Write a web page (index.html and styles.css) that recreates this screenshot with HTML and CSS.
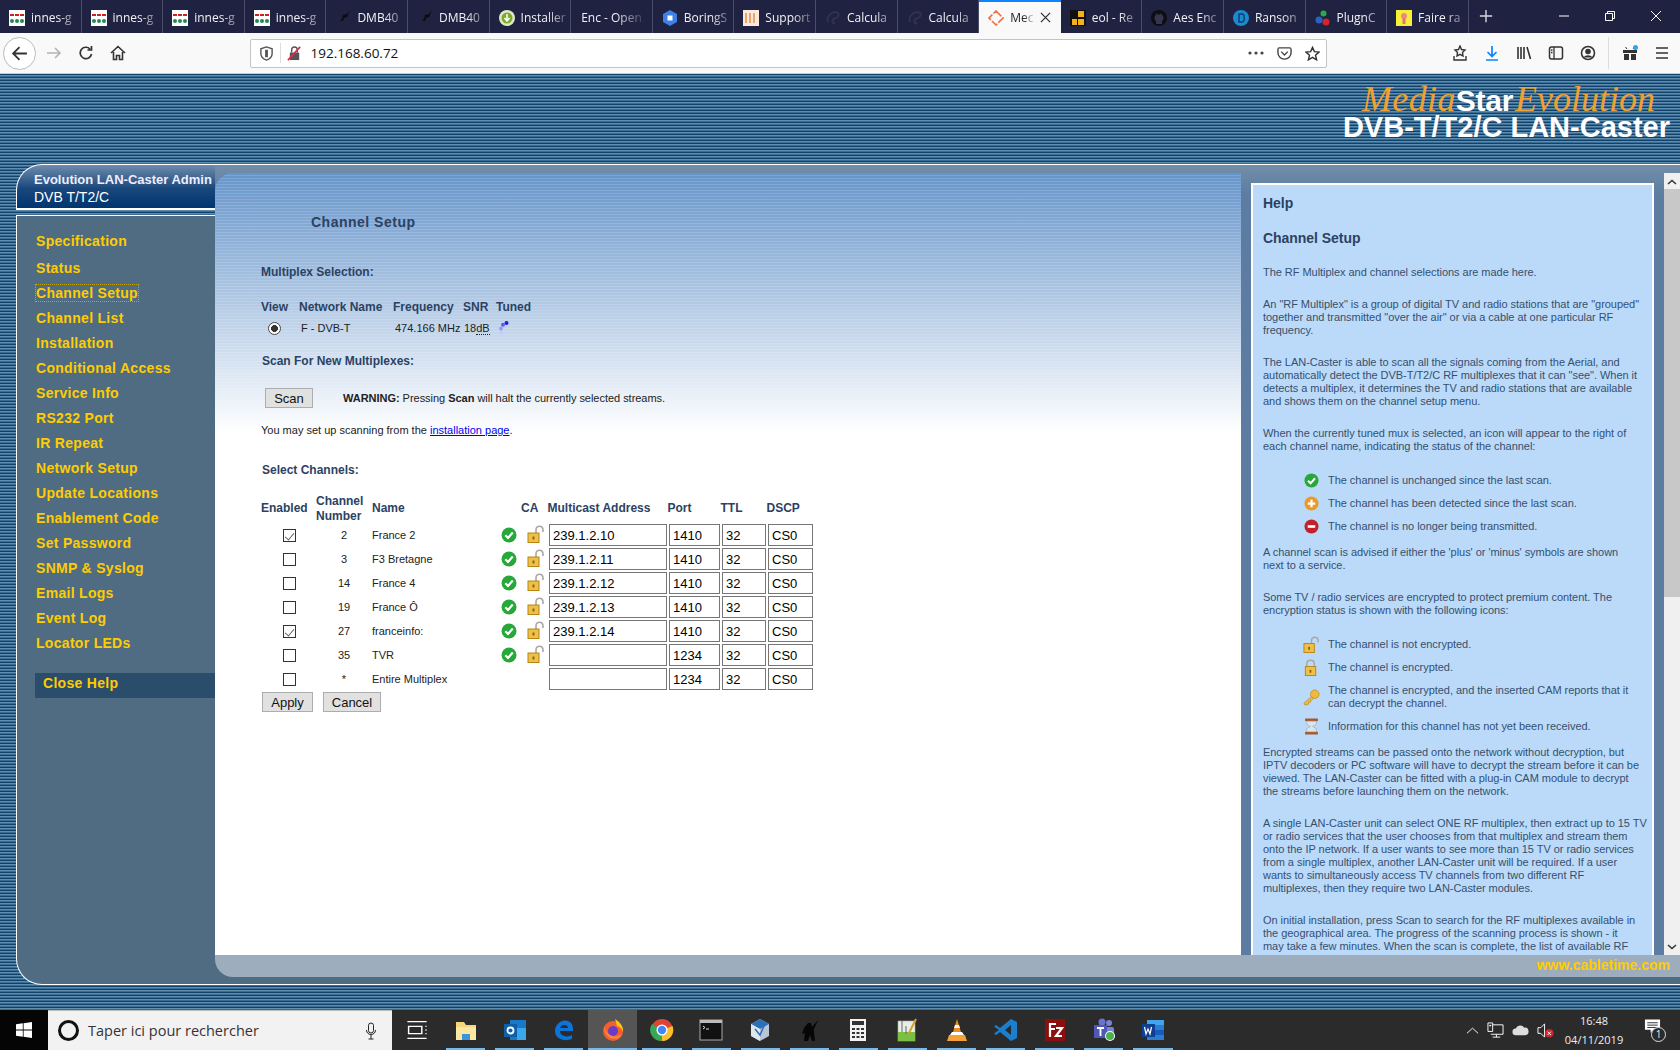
FILE: index.html
```html
<!DOCTYPE html>
<html lang="fr">
<head>
	<meta charset="utf-8">
	<title>MediaStar Evolution</title>
	<link rel="stylesheet" href="styles.css">
</head>
<body>
	<!-- icons used more than once -->
	<svg class="defs" aria-hidden="true">
		<symbol id="i-inn" viewBox="0 0 16 16"><rect width="16" height="16" fill="#fff"/><rect x="1" y="4" width="4" height="2" fill="#c22"/><rect x="6" y="4" width="4" height="2" fill="#c22"/><rect x="11" y="4" width="4" height="2" fill="#c22"/><circle cx="3" cy="11" r="2" fill="#285"/><circle cx="8" cy="11" r="2" fill="#285"/><circle cx="13" cy="11" r="2" fill="#285"/></symbol>
		<symbol id="i-dmb" viewBox="0 0 16 16"><path d="M1 15 7 9 8 5 12 4 15 0 12 7 9 8 8 11 5 11Z" fill="#0b0b10"/></symbol>
		<symbol id="i-calc" viewBox="0 0 16 16"><path d="M3 12C1 7 6 2 11 2 15 3 14 7 11 8 7 9 6 12 10 14" fill="none" stroke="#30334a" stroke-width="2"/></symbol>
		<symbol id="i-ok" viewBox="0 0 16 16"><circle cx="8" cy="8" r="7.5" fill="#27a83a"/><path d="M4.3 8.2 7 11l4.8-5.4" fill="none" stroke="#fff" stroke-width="2.2"/></symbol>
		<symbol id="i-open" viewBox="0 0 18 18"><path d="M9 9V5c0-5 7-5 7 0v2" fill="none" stroke="#a8a8a8" stroke-width="1.6"/><rect x="1" y="8" width="11" height="9.5" fill="#eec04a" stroke="#b98512"/><rect x="5.6" y="11.5" width="1.8" height="3" fill="#8a5d08"/></symbol>
	</svg>

	<div class="tabbar">
		<div class="tab"><svg class="fav"><use href="#i-inn"/></svg><span class="tab-title">innes-g</span></div>
		<div class="tab"><svg class="fav"><use href="#i-inn"/></svg><span class="tab-title">innes-g</span></div>
		<div class="tab"><svg class="fav"><use href="#i-inn"/></svg><span class="tab-title">innes-g</span></div>
		<div class="tab"><svg class="fav"><use href="#i-inn"/></svg><span class="tab-title">innes-g</span></div>
		<div class="tab"><svg class="fav"><use href="#i-dmb"/></svg><span class="tab-title">DMB40</span></div>
		<div class="tab"><svg class="fav"><use href="#i-dmb"/></svg><span class="tab-title">DMB40</span></div>
		<div class="tab"><svg class="fav" viewBox="0 0 16 16"><circle cx="8" cy="8" r="8" fill="#dfe8c8"/><circle cx="8" cy="8" r="5.5" fill="#7cab2c"/><path d="M8 4v6M5.500 8 8 11l2.500-3" fill="none" stroke="#fff" stroke-width="1.500"/></svg><span class="tab-title">Installer</span></div>
		<div class="tab"><span class="tab-title wide">Enc - Open</span></div>
		<div class="tab"><svg class="fav" viewBox="0 0 16 16"><path d="M8 0 15 4V12L8 16 1 12V4Z" fill="#3f7fe8"/><rect x="5.500" y="5.500" width="5" height="5" fill="#fff"/></svg><span class="tab-title">BoringS</span></div>
		<div class="tab"><svg class="fav" viewBox="0 0 16 16"><rect width="16" height="16" fill="#fbeadb"/><path d="M3 3v10M7 3v10M11 3v10" stroke="#eda56d" stroke-width="2"/></svg><span class="tab-title">Support</span></div>
		<div class="tab"><svg class="fav"><use href="#i-calc"/></svg><span class="tab-title">Calcula</span></div>
		<div class="tab"><svg class="fav"><use href="#i-calc"/></svg><span class="tab-title">Calcula</span></div>
		<div class="tab tab-active"><svg class="fav" viewBox="0 0 16 16"><path d="M8 1 15 8 8 15 1 8Z" fill="none" stroke="#f0703a" stroke-width="1.600" stroke-dasharray="7.500 1.500"/></svg><span class="tab-title short">Mec</span><svg class="tab-close" viewBox="0 0 12 12"><path d="M1 1l10 10M11 1 1 11" stroke="#333" stroke-width="1.400"/></svg></div>
		<div class="tab"><svg class="fav" viewBox="0 0 16 16"><rect width="16" height="16" fill="#111"/><rect x="8" y="1" width="6" height="6" fill="#f5b11d"/><rect x="2" y="9" width="5" height="6" fill="#f5b11d"/><rect x="8" y="9" width="6" height="6" fill="#f5b11d"/></svg><span class="tab-title">eol - Re</span></div>
		<div class="tab"><svg class="fav" viewBox="0 0 16 16"><circle cx="8" cy="8" r="8" fill="#0d0d12"/><path d="M5 14V11C3 10 3 6 5 5L5.500 3 7 4.500H9L10.500 3 11 5C13 6 13 10 11 11V14Z" fill="#34364e"/></svg><span class="tab-title">Aes Enc</span></div>
		<div class="tab"><svg class="fav" viewBox="0 0 16 16"><circle cx="8" cy="8" r="8" fill="#1b8bd0"/><path d="M6 4h3c3 0 3 8 0 8H6Z" fill="none" stroke="#0c3f6a" stroke-width="1.500"/></svg><span class="tab-title">Ranson</span></div>
		<div class="tab"><svg class="fav" viewBox="0 0 16 16"><circle cx="8.500" cy="3.500" r="3" fill="#2aa84a"/><circle cx="4" cy="10" r="3.500" fill="#2b5fc8"/><circle cx="11" cy="12" r="3.500" fill="#d6222c"/></svg><span class="tab-title">PlugnC</span></div>
		<div class="tab"><svg class="fav" viewBox="0 0 16 16"><rect width="16" height="16" fill="#f7ee3a"/><circle cx="8" cy="6" r="3" fill="#e88"/><rect x="6.500" y="8" width="3" height="6" fill="#d77"/></svg><span class="tab-title">Faire ra</span></div>
		<svg class="new-tab" viewBox="0 0 16 16"><path d="M8 1v14M1 8h14" stroke="#d8d8e0" stroke-width="1.600"/></svg>
		<div class="win-ctrls">
			<svg viewBox="0 0 12 12"><path d="M1 6h10" stroke="#fff"/></svg>
			<svg viewBox="0 0 12 12"><path d="M1.500 3.500h7v7h-7zM3.500 3.500v-2h7v7h-2" fill="none" stroke="#fff"/></svg>
			<svg viewBox="0 0 12 12"><path d="M1 1l10 10M11 1 1 11" stroke="#fff"/></svg>
		</div>
	</div>

	<div class="toolbar">
		<div class="back-btn"><svg viewBox="0 0 16 16"><path d="M15 8H2M8 2 2 8l6 6" fill="none" stroke="#333" stroke-width="1.700"/></svg></div>
		<svg class="tool-ic" viewBox="0 0 16 16"><path d="M1 8h13M9 3l5 5-5 5" fill="none" stroke="#b4b4b8" stroke-width="1.600"/></svg>
		<svg class="tool-ic" viewBox="0 0 16 16"><path d="M13.500 9A5.700 5.700 0 1 1 12 4M13.500 1v4h-4" fill="none" stroke="#333" stroke-width="1.700"/></svg>
		<svg class="tool-ic" viewBox="0 0 16 16"><path d="M1 8 8 1.500 15 8M3.500 7v7.500h3v-4h3v4h3V7" fill="none" stroke="#333" stroke-width="1.600"/></svg>
		<div class="urlbar">
			<svg class="url-ic" viewBox="0 0 16 16"><path d="M8 1 2 3v5c0 4 3 6 6 7 3-1 6-3 6-7V3Z" fill="none" stroke="#555" stroke-width="1.500"/><path d="M8 4v8" stroke="#555" stroke-width="3"/></svg>
			<span class="url-sep"></span>
			<svg class="url-ic" viewBox="0 0 16 16"><rect x="3" y="7" width="10" height="8" fill="#555"/><path d="M5 7V4c0-4 6-4 6 0v3" fill="none" stroke="#555" stroke-width="1.500"/><path d="M1 15 14 1" stroke="#e22850" stroke-width="1.800"/></svg>
			<span class="url-text">192.168.60.72</span>
			<svg class="url-dots" viewBox="0 0 16 4"><circle cx="2" cy="2" r="1.600" fill="#444"/><circle cx="8" cy="2" r="1.600" fill="#444"/><circle cx="14" cy="2" r="1.600" fill="#444"/></svg>
			<svg class="url-ic" viewBox="0 0 16 16"><path d="M2 2h12c1 0 1 1 1 2v3c0 4-3 7-7 7S1 11 1 7V4c0-1 0-2 1-2Z" fill="none" stroke="#444" stroke-width="1.500"/><path d="m4.500 6 3.500 3.500L11.500 6" fill="none" stroke="#444" stroke-width="1.500"/></svg>
			<svg class="url-ic" viewBox="0 0 16 16"><path d="M8 1.500 10 6l5 .5-3.800 3.300 1.200 5L8 12.200l-4.400 2.600 1.200-5L1 6.500 6 6Z" fill="none" stroke="#333" stroke-width="1.500"/></svg>
		</div>
		<div class="tool-right">
			<svg class="tool-ic" viewBox="0 0 16 16"><path d="M8 1 9.500 4.500 13 5 10.500 7.500 11 11 8 9.300 5 11 5.500 7.500 3 5 6.500 4.500Z" fill="none" stroke="#333" stroke-width="1.400"/><path d="M2 11v4h12v-4" fill="none" stroke="#333" stroke-width="1.400"/></svg>
			<svg class="tool-ic" viewBox="0 0 16 16"><path d="M8 1v10M3.500 7 8 11.500 12.500 7M2 15h12" fill="none" stroke="#0a84ff" stroke-width="1.700"/></svg>
			<svg class="tool-ic" viewBox="0 0 16 16"><path d="M2 2v12M5 2v12M8 2v12M11 2l3.500 12" fill="none" stroke="#333" stroke-width="1.600"/></svg>
			<svg class="tool-ic" viewBox="0 0 16 16"><rect x="1.500" y="2" width="13" height="12" rx="2" fill="none" stroke="#333" stroke-width="1.500"/><path d="M6 2v12M3 5h1.500M3 7.500h1.500" stroke="#333" stroke-width="1.300"/></svg>
			<svg class="tool-ic" viewBox="0 0 16 16"><circle cx="8" cy="8" r="6.500" fill="none" stroke="#333" stroke-width="1.600"/><circle cx="8" cy="6.500" r="2.800" fill="#333"/><path d="M3.500 12.500c2-3 7-3 9 0" fill="#333"/></svg>
			<span class="tool-sep"></span>
			<svg class="tool-ic" viewBox="0 0 16 16"><path d="M1 5h14v3H1zM2 9h5v6H2zM9 9h5v6H9z" fill="#333"/><path d="M5 4 3.500 2M11 4l1.500-2" stroke="#333"/><circle cx="13.500" cy="2.500" r="2.500" fill="#2aa4f4"/></svg>
			<svg class="tool-ic" viewBox="0 0 16 16"><path d="M2 3h12M2 8h12M2 13h12" stroke="#333" stroke-width="1.700"/></svg>
		</div>
	</div>

	<div class="page">
		<div class="banner">
			<div class="logo-top"><span class="logo-serif media">Media</span><span class="logo-bold">Star</span><span class="logo-serif evo">Evolution</span></div>
			<div class="logo-sub">DVB-T/T2/C LAN-Caster</div>
		</div>

		<div class="frame">
			<div class="side">
				<div class="side-head">
					<div class="side-title">Evolution LAN-Caster Admin</div>
					<div class="side-sub">DVB T/T2/C</div>
				</div>
				<div class="side-nav">
					<a class="nav-item first" href="#">Specification</a>
					<a class="nav-item" href="#">Status</a>
					<a class="nav-item" href="#"><span class="nav-current">Channel Setup</span></a>
					<a class="nav-item" href="#">Channel List</a>
					<a class="nav-item" href="#">Installation</a>
					<a class="nav-item" href="#">Conditional Access</a>
					<a class="nav-item" href="#">Service Info</a>
					<a class="nav-item" href="#">RS232 Port</a>
					<a class="nav-item" href="#">IR Repeat</a>
					<a class="nav-item" href="#">Network Setup</a>
					<a class="nav-item" href="#">Update Locations</a>
					<a class="nav-item" href="#">Enablement Code</a>
					<a class="nav-item" href="#">Set Password</a>
					<a class="nav-item" href="#">SNMP &amp; Syslog</a>
					<a class="nav-item" href="#">Email Logs</a>
					<a class="nav-item" href="#">Event Log</a>
					<a class="nav-item" href="#">Locator LEDs</a>
					<a class="close-help" href="#">Close Help</a>
				</div>
			</div>

			<div class="main">
				<div class="main-row">
					<div class="content">
						<h2 class="content-title">Channel Setup</h2>
						<h3 class="sec-mux">Multiplex Selection:</h3>
						<table class="mux">
							<tr><th class="m1">View</th><th class="m2">Network Name</th><th class="m3">Frequency</th><th class="m4">SNR</th><th>Tuned</th></tr>
							<tr>
								<td><input class="radio" type="radio" checked></td>
								<td class="mux-net">F - DVB-T</td>
								<td class="mux-net">474.166 MHz</td>
								<td>18<span class="abbr">dB</span></td>
								<td>
									<svg class="tuned" viewBox="0 0 12 14"><circle cx="9.500" cy="2" r="2" fill="#1c1ce0"/><circle cx="6" cy="3.800" r="2" fill="#5a5aec"/><circle cx="4" cy="7.500" r="2" fill="#9a9af4"/><circle cx="4.500" cy="11.800" r="2" fill="#c8c8fa"/></svg>
								</td>
							</tr>
						</table>
						<h3 class="sec-scan">Scan For New Multiplexes:</h3>
						<div class="scan-row">
							<button class="btn btn-scan" type="button">Scan</button>
							<span class="warn"><b>WARNING:</b> Pressing <b>Scan</b> will halt the currently selected streams.</span>
						</div>
						<p class="note">You may set up scanning from the <a href="#">installation page</a>.</p>
						<h3 class="sec-chan">Select Channels:</h3>

						<table class="chan">
							<colgroup>
								<col class="c-en"><col class="c-num"><col class="c-name"><col class="c-st"><col class="c-ca"><col class="c-addr"><col class="c-port"><col class="c-ttl"><col class="c-dscp">
							</colgroup>
							<thead>
								<tr><th>Enabled</th><th>Channel<br>Number</th><th>Name</th><th></th><th class="th-ca">CA</th><th>Multicast Address</th><th>Port</th><th>TTL</th><th>DSCP</th></tr>
							</thead>
							<tbody>
								<tr>
									<td class="center"><input class="check" type="checkbox" checked></td><td class="center">2</td><td>France 2</td>
									<td><svg class="ic-st"><use href="#i-ok"/></svg></td><td><svg class="ic-lock"><use href="#i-open"/></svg></td>
									<td><input class="field" value="239.1.2.10"></td><td><input class="field" value="1410"></td><td><input class="field" value="32"></td><td><input class="field" value="CS0"></td>
								</tr>
								<tr>
									<td class="center"><input class="check" type="checkbox"></td><td class="center">3</td><td>F3 Bretagne</td>
									<td><svg class="ic-st"><use href="#i-ok"/></svg></td><td><svg class="ic-lock"><use href="#i-open"/></svg></td>
									<td><input class="field" value="239.1.2.11"></td><td><input class="field" value="1410"></td><td><input class="field" value="32"></td><td><input class="field" value="CS0"></td>
								</tr>
								<tr>
									<td class="center"><input class="check" type="checkbox"></td><td class="center">14</td><td>France 4</td>
									<td><svg class="ic-st"><use href="#i-ok"/></svg></td><td><svg class="ic-lock"><use href="#i-open"/></svg></td>
									<td><input class="field" value="239.1.2.12"></td><td><input class="field" value="1410"></td><td><input class="field" value="32"></td><td><input class="field" value="CS0"></td>
								</tr>
								<tr>
									<td class="center"><input class="check" type="checkbox"></td><td class="center">19</td><td>France Ô</td>
									<td><svg class="ic-st"><use href="#i-ok"/></svg></td><td><svg class="ic-lock"><use href="#i-open"/></svg></td>
									<td><input class="field" value="239.1.2.13"></td><td><input class="field" value="1410"></td><td><input class="field" value="32"></td><td><input class="field" value="CS0"></td>
								</tr>
								<tr>
									<td class="center"><input class="check" type="checkbox" checked></td><td class="center">27</td><td>franceinfo:</td>
									<td><svg class="ic-st"><use href="#i-ok"/></svg></td><td><svg class="ic-lock"><use href="#i-open"/></svg></td>
									<td><input class="field" value="239.1.2.14"></td><td><input class="field" value="1410"></td><td><input class="field" value="32"></td><td><input class="field" value="CS0"></td>
								</tr>
								<tr>
									<td class="center"><input class="check" type="checkbox"></td><td class="center">35</td><td>TVR</td>
									<td><svg class="ic-st"><use href="#i-ok"/></svg></td><td><svg class="ic-lock"><use href="#i-open"/></svg></td>
									<td><input class="field" value=""></td><td><input class="field" value="1234"></td><td><input class="field" value="32"></td><td><input class="field" value="CS0"></td>
								</tr>
								<tr>
									<td class="center"><input class="check" type="checkbox"></td><td class="center">*</td><td colspan="3">Entire Multiplex</td>
									<td><input class="field" value=""></td><td><input class="field" value="1234"></td><td><input class="field" value="32"></td><td><input class="field" value="CS0"></td>
								</tr>
							</tbody>
						</table>
						<div class="form-btns">
							<button class="btn btn-apply" type="button">Apply</button>
							<button class="btn btn-cancel" type="button">Cancel</button>
						</div>
					</div>

					<div class="help-col">
						<div class="help">
							<h3 class="help-h">Help</h3>
							<h3 class="help-h help-h2">Channel Setup</h3>
							<p>The RF Multiplex and channel selections are made here.</p>
							<p>An "RF Multiplex" is a group of digital TV and radio stations that are "grouped"<br>together and transmitted "over the air" or via a cable at one particular RF<br>frequency.</p>
							<p>The LAN-Caster is able to scan all the signals coming from the Aerial, and<br>automatically detect the DVB-T/T2/C RF multiplexes that it can "see". When it<br>detects a multiplex, it determines the TV and radio stations that are available<br>and shows them on the channel setup menu.</p>
							<p>When the currently tuned mux is selected, an icon will appear to the right of<br>each channel name, indicating the status of the channel:</p>
							<div class="legend">
								<svg class="leg-ic"><use href="#i-ok"/></svg><span>The channel is unchanged since the last scan.</span>
								<svg class="leg-ic" viewBox="0 0 16 16"><circle cx="8" cy="8" r="7.500" fill="#ee9a22"/><path d="M8 4v8M4 8h8" stroke="#fff" stroke-width="2.400"/></svg><span>The channel has been detected since the last scan.</span>
								<svg class="leg-ic" viewBox="0 0 16 16"><circle cx="8" cy="8" r="7.500" fill="#c4202a"/><path d="M4 8h8" stroke="#fff" stroke-width="2.800"/></svg><span>The channel is no longer being transmitted.</span>
							</div>
							<p>A channel scan is advised if either the 'plus' or 'minus' symbols are shown<br>next to a service.</p>
							<p>Some TV / radio services are encrypted to protect premium content. The<br>encryption status is shown with the following icons:</p>
							<div class="legend">
								<svg class="leg-ic leg-big"><use href="#i-open"/></svg><span>The channel is not encrypted.</span>
								<svg class="leg-ic leg-big" viewBox="0 0 18 18"><path d="M4 8V5c0-5 8-5 8 0v3" fill="none" stroke="#a8a8a8" stroke-width="1.600"/><rect x="2.500" y="8" width="11" height="9.500" fill="#eec04a" stroke="#b98512"/><rect x="7" y="11.500" width="1.800" height="3" fill="#8a5d08"/></svg><span>The channel is encrypted.</span>
								<svg class="leg-ic leg-big" viewBox="0 0 18 18"><path d="M1 15 9 8l2 2-2 2-1 0 0 2-2 0 0 2-4 1Z" fill="#eeb93c" stroke="#b98512" stroke-width=".7"/><circle cx="12.500" cy="5.500" r="4.500" fill="#eeb93c" stroke="#b98512" stroke-width=".7"/></svg><span>The channel is encrypted, and the inserted CAM reports that it<br>can decrypt the channel.</span>
								<svg class="leg-ic leg-big" viewBox="0 0 16 16"><rect x="2" y="0.500" width="12" height="2.500" fill="#a5562a"/><rect x="2" y="13" width="12" height="2.500" fill="#a5562a"/><path d="M3.500 3h9v3L9 8l3.500 2v3h-9v-3L7 8 3.500 6Z" fill="#d9e6f2" stroke="#a5a5a5" stroke-width=".6"/></svg><span>Information for this channel has not yet been received.</span>
							</div>
							<p>Encrypted streams can be passed onto the network without decryption, but<br>IPTV decoders or PC software will have to decrypt the stream before it can be<br>viewed. The LAN-Caster can be fitted with a plug-in CAM module to decrypt<br>the streams before launching them on the network.</p>
							<p>A single LAN-Caster unit can select ONE RF multiplex, then extract up to 15 TV<br>or radio services that the user chooses from that multiplex and stream them<br>onto the IP network. If a user wants to see more than 15 TV or radio services<br>from a single multiplex, another LAN-Caster unit will be required. If a user<br>wants to simultaneously access TV channels from two different RF<br>multiplexes, then they require two LAN-Caster modules.</p>
							<p>On initial installation, press Scan to search for the RF multiplexes available in<br>the geographical area. The progress of the scanning process is shown - it<br>may take a few minutes. When the scan is complete, the list of available RF</p>
						</div>
					</div>
					<div class="scrollbar">
						<svg class="sb-arrow" viewBox="0 0 10 6"><path d="M1 5 5 1.500 9 5" fill="none" stroke="#333" stroke-width="1.500"/></svg>
						<div class="sb-thumb"></div>
						<svg class="sb-arrow sb-down" viewBox="0 0 10 6"><path d="M1 1 5 4.500 9 1" fill="none" stroke="#333" stroke-width="1.500"/></svg>
					</div>
				</div>
				<div class="strip"><span class="site">www.cabletime.com</span></div>
			</div>
		</div>
	</div>

	<div class="taskbar">
		<div class="start"><svg viewBox="0 0 16 16"><path d="M0 2.300 6.800 1.300V7.600H0ZM7.600 1.200 16 0V7.600H7.600ZM0 8.400H6.800V14.700L0 13.700ZM7.600 8.400H16V16L7.600 14.800Z" fill="#fff"/></svg></div>
		<div class="search">
			<span class="cortana"></span>
			<span class="search-text">Taper ici pour rechercher</span>
			<svg class="mic" viewBox="0 0 12 18"><rect x="3.500" y="1" width="5" height="10" rx="2.500" fill="none" stroke="#222"/><path d="M1.500 8c0 6 9 6 9 0M6 13v4M3.500 17h5" fill="none" stroke="#222"/></svg>
		</div>
		<div class="task-apps">
			<div class="app"><svg viewBox="0 0 20 20"><path d="M2 3h16M2 17h16M3 7h11v6H3zM17 7h1M17 10h1M17 13h1" fill="none" stroke="#fff" stroke-width="1.200"/></svg></div>
			<div class="app run"><svg viewBox="0 0 24 24"><path d="M2 4h8l2 3h10v15H2Z" fill="#f6d67a"/><path d="M2 9h20v13H2Z" fill="#fbe6a2"/><path d="M8 22v-6h8v6Z" fill="#3b95d8"/></svg></div>
			<div class="app run"><svg viewBox="0 0 24 24"><rect x="7" y="2" width="16" height="20" fill="#1a78c8"/><rect x="14" y="10" width="9" height="12" fill="#38a8e8"/><rect x="1" y="6" width="13" height="13" fill="#0f5ea8"/><circle cx="7.500" cy="12.500" r="3" fill="none" stroke="#fff" stroke-width="1.800"/></svg></div>
			<div class="app run"><svg viewBox="0 0 24 24"><path d="M21 13H8c0 5 7 7 12 4v4c-8 3-17 0-17-8C3 4 14-1 19 5c2 2 2 5 2 8ZM8 10h8c0-4-7-4-8 0Z" fill="#0a74d8"/></svg></div>
			<div class="app run active"><svg viewBox="0 0 24 24"><circle cx="12" cy="13" r="10" fill="#f4602c"/><path d="M14 1c5 3 9 8 8 13-1-4-4-5-6-6Z" fill="#fcc21b"/><circle cx="12" cy="13" r="5" fill="#6a3bc8"/><path d="M3 8c2 8 9 14 18 8-4 8-18 6-18-8Z" fill="#f9873a"/></svg></div>
			<div class="app run"><svg viewBox="0 0 24 24"><circle cx="12" cy="12" r="11" fill="#dd4436"/><path d="M12 12 22.500 8A11 11 0 0 1 12 23Z" fill="#fbc02d"/><path d="M12 12 12 23A11 11 0 0 1 2 6Z" fill="#3aa757"/><circle cx="12" cy="12" r="5.500" fill="#fff"/><circle cx="12" cy="12" r="4.200" fill="#4285f4"/></svg></div>
			<div class="app run"><svg viewBox="0 0 24 24"><rect x="1" y="2" width="22" height="20" fill="#111" stroke="#aaa"/><rect x="1" y="2" width="22" height="3" fill="#bbb"/><path d="M4 8l2 1.500L4 11M7 11h3" stroke="#ddd" fill="none"/></svg></div>
			<div class="app run"><svg viewBox="0 0 24 24"><path d="M12 1 21 6V18L12 23 3 18V6Z" fill="#b9c5d6"/><path d="M12 1 21 6 12 11 3 6Z" fill="#2a6fb8"/><path d="M12 11V23L3 18V6Z" fill="#dfe6ee"/><path d="M7 11l5 6 4-9" fill="none" stroke="#2a6fb8" stroke-width="1.500"/></svg></div>
			<div class="app run"><svg viewBox="0 0 24 24"><path d="M11 5h3l1 4 6-7-4 9v4l1 8h-3l-2-6-2 6H7l1-8-3 1 2-6Z" fill="#060606"/></svg></div>
			<div class="app run"><svg viewBox="0 0 24 24"><rect x="4" y="1" width="16" height="22" fill="#f2f2f2"/><rect x="6" y="3" width="12" height="4" fill="#333"/><path d="M6 10h3v2H6zM10.500 10h3v2h-3zM15 10h3v2h-3zM6 14h3v2H6zM10.500 14h3v2h-3zM15 14h3v2h-3zM6 18h3v2H6zM10.500 18h3v2h-3zM15 18h3v2h-3z" fill="#333"/></svg></div>
			<div class="app run"><svg viewBox="0 0 24 24"><rect x="3" y="3" width="17" height="20" fill="#e8efe6" stroke="#aaa" stroke-width=".6"/><rect x="3" y="14" width="17" height="9" fill="#7ac043"/><path d="M7 3v11M11 8v8" stroke="#666"/><path d="M21 1 14 15" stroke="#d8a02a" stroke-width="2"/></svg></div>
			<div class="app run"><svg viewBox="0 0 24 24"><path d="M12 1 16 14H8Z" fill="#f08a1c"/><path d="M10 7h4l1 3H9Z" fill="#fff"/><path d="M4 17h16l2 6H2Z" fill="#f4a13a"/><path d="M7 14h10l2 3H5Z" fill="#fff"/></svg></div>
			<div class="app run"><svg viewBox="0 0 24 24"><path d="M17 1 23 4V20L17 23 6 14 2 17 0 15.500 5 12 0 8.500 2 7 6 10Z" fill="#1b7fd0"/><path d="M17 7 11 12 17 17Z" fill="#2b2b2b"/></svg></div>
			<div class="app run"><svg viewBox="0 0 24 24"><rect x="2" y="1" width="20" height="22" fill="#8e0e0e"/><path d="M7 19V6h6M7 11h5M13 10h6l-6 8h6" fill="none" stroke="#fff" stroke-width="2.200"/></svg></div>
			<div class="app run"><svg viewBox="0 0 24 24"><circle cx="17" cy="5" r="3" fill="#7b83d6"/><circle cx="10" cy="4" r="3.500" fill="#6b73cc"/><rect x="12" y="9" width="10" height="10" rx="2" fill="#7b83d6"/><rect x="2" y="7" width="13" height="13" fill="#4f58b8"/><path d="M5 10h7M8.500 10v8" stroke="#fff" stroke-width="1.800"/><circle cx="18" cy="18" r="5" fill="#fff"/><circle cx="18" cy="18" r="4" fill="#4caf50"/></svg></div>
			<div class="app run"><svg viewBox="0 0 24 24"><rect x="6" y="2" width="17" height="20" fill="#2b7cd3"/><rect x="6" y="2" width="17" height="5" fill="#41a5ee"/><rect x="6" y="12" width="17" height="5" fill="#185abd"/><rect x="1" y="6" width="13" height="13" fill="#103f91"/><path d="M3.500 9l1.500 7 2-5 2 5 1.500-7" fill="none" stroke="#fff" stroke-width="1.200"/></svg></div>
		</div>
		<div class="tray">
			<svg class="tray-ic chev" viewBox="0 0 14 8"><path d="M1 7 7 1.500 13 7" fill="none" stroke="#fff"/></svg>
			<svg class="tray-ic" viewBox="0 0 18 18"><path d="M1 1h5v9H1zM6 3h11v10H4M10 13v3M6 16h8" fill="none" stroke="#fff"/><rect x="2.500" y="3" width="2" height="1.500" fill="#fff"/></svg>
			<svg class="tray-ic" viewBox="0 0 18 12"><path d="M4 11a3.500 3.500 0 0 1 0-7 5 5 0 0 1 9-1 4 4 0 0 1 1 8Z" fill="#ddd"/></svg>
			<svg class="tray-ic" viewBox="0 0 18 18"><path d="M1 6h3l4-4v14l-4-4H1Z" fill="none" stroke="#fff"/><circle cx="13" cy="12" r="4.500" fill="#d8222c"/><path d="M11.200 10.200l3.600 3.600M14.800 10.200l-3.600 3.600" stroke="#fff"/></svg>
			<div class="clock"><span>16:48</span><span>04/11/2019</span></div>
			<div class="notif">
				<svg viewBox="0 0 18 16"><path d="M1 0h16v11H10l-3 3v-3H1Z" fill="#fff"/><path d="M3.500 3.500h11M3.500 6h11M3.500 8.500h11" stroke="#2b2b2b"/></svg>
				<span class="notif-badge">1</span>
			</div>
		</div>
	</div>
</body>
</html>
```

FILE: styles.css
```css
/* General Reset */
* {
	box-sizing: border-box;
	margin: 0;
	padding: 0;
}

html, body {
	height: 100%;
}

body {
	display: flex;
	flex-direction: column;
	overflow: hidden;
	font-family: "Liberation Sans", Arial, sans-serif;
}

.defs {
	position: absolute;
	width: 0;
	height: 0;
}

/* Browser tabs */
.tabbar {
	display: flex;
	flex: 0 0 33px;
	background: #1f2240;
	font-family: "Open Sans", sans-serif;
	font-size: 12px;
	color: #f2f2f6;
}

.tab {
	display: flex;
	align-items: center;
	flex: 0 0 81.6px;
	height: 33px;
	padding: 2px 0 0 9px;
	border-right: 1px solid #4a4d68;
	overflow: hidden;
}

.fav {
	flex: none;
	width: 16px;
	height: 16px;
	margin-right: 6px;
}

.tab-title {
	flex: 1;
	overflow: hidden;
	white-space: nowrap;
	-webkit-mask-image: linear-gradient(to right, #000 55%, rgba(0, 0, 0, .15) 98%);
	mask-image: linear-gradient(to right, #000 55%, rgba(0, 0, 0, .15) 98%);
}

.tab-title.wide {
	padding-left: 1px;
	margin-right: 8px;
}

.tab-active {
	background: #f9f9fa;
	border-top: 2px solid #0a84ff;
	border-right: none;
	padding-top: 0;
	color: #222;
}

.tab-title.short {
	flex: 0 0 24px;
}

.tab-close {
	flex: none;
	width: 11px;
	height: 11px;
	margin-left: 6px;
}

.new-tab {
	width: 14px;
	height: 14px;
	margin: 9px 0 0 10px;
}

.win-ctrls {
	display: flex;
	gap: 34px;
	margin-left: auto;
	padding: 10px 18px 0 0;
}

.win-ctrls svg {
	width: 12px;
	height: 12px;
}

/* Browser toolbar */
.toolbar {
	display: flex;
	align-items: center;
	flex: 0 0 41px;
	padding-left: 3px;
	background: #f9f9fa;
	border-bottom: 1px solid #ccc;
}

.back-btn {
	display: flex;
	align-items: center;
	justify-content: center;
	width: 33px;
	height: 33px;
	margin-right: 10px;
	background: #fff;
	border: 1px solid #bbb;
	border-radius: 50%;
}

.back-btn svg {
	width: 17px;
	height: 17px;
}

.tool-ic {
	flex: none;
	width: 16px;
	height: 16px;
	margin-right: 16px;
}

.urlbar {
	display: flex;
	align-items: center;
	width: 1077px;
	height: 29px;
	margin-left: 108px;
	padding: 0 6px 0 8px;
	background: #fff;
	border: 1px solid #c4c4c4;
	border-radius: 2px;
	font-family: "Open Sans", sans-serif;
}

.url-ic {
	flex: none;
	width: 15px;
	height: 15px;
}

.url-ic:last-child {
	margin-left: 13px;
}

.url-sep {
	width: 1px;
	height: 20px;
	margin: 0 6px;
	background: #ddd;
}

.url-text {
	margin-left: 8.500px;
	font-size: 13.500px;
	color: #111;
}

.url-dots {
	width: 16px;
	height: 4px;
	margin: 0 13px 0 auto;
}

.tool-right {
	display: flex;
	align-items: center;
	margin-left: 125px;
}

.tool-right .tool-ic:last-child {
	margin-right: 0;
}

.tool-sep {
	width: 1px;
	height: 32px;
	margin: 0 13px 0 -4px;
	background: #ddd;
}

/* Page */
.page {
	flex: 1;
	background: repeating-linear-gradient(#12426b 0, #12426b 1px, #5f8dad 1px, #5f8dad 2px, #3a6d94 2px, #3a6d94 3px);
}

.banner {
	display: flex;
	flex-direction: column;
	align-items: flex-end;
	height: 90px;
	padding: 9px 10px 0 0;
}

.logo-top {
	display: flex;
	align-items: baseline;
	height: 32px;
	margin-right: 15px;
	line-height: 32px;
}

.logo-serif {
	font-family: "Liberation Serif", serif;
	font-style: italic;
	font-size: 36px;
	color: #f0a030;
}

.logo-serif.media {
	letter-spacing: .4px;
}

.logo-bold {
	font-size: 30px;
	font-weight: bold;
	letter-spacing: -.3px;
	color: #fff;
}

.logo-serif.evo {
	margin-left: 2px;
}

.logo-sub {
	font-size: 29px;
	font-weight: bold;
	line-height: 25px;
	color: #fff;
}

.frame {
	display: flex;
	height: 821px;
	margin-left: 16px;
}

/* Left menu */
.side {
	display: flex;
	flex-direction: column;
	flex: 0 0 199px;
}

.side-head {
	height: 46px;
	padding: 7px 0 0 17px;
	background: linear-gradient(#6e8cab, #19477c 55%, #00356f);
	border: solid #fff;
	border-width: 1px 0 2px 1px;
	border-top-left-radius: 26px;
	color: #fff;
}

.side-title {
	font-size: 13px;
	font-weight: bold;
	line-height: 16px;
	white-space: nowrap;
	color: #eef;
}

.side-sub {
	font-size: 14px;
	line-height: 19px;
}

.side-nav {
	flex: 1;
	margin-top: 5px;
	padding-top: 13px;
	background: #4f6c82;
	border: solid #fff;
	border-width: 1px 0 1px 1px;
	border-bottom-left-radius: 26px;
}

.nav-item {
	display: block;
	height: 25px;
	padding-left: 19px;
	font-size: 14px;
	font-weight: bold;
	line-height: 25px;
	letter-spacing: .3px;
	color: #ffcc00;
	text-decoration: none;
}

.nav-item.first {
	margin-bottom: 2px;
}

.nav-current {
	outline: 1px dotted #c9a400;
}

.close-help {
	display: block;
	height: 25px;
	margin: 17px 0 0 18px;
	padding-left: 8px;
	background: #2a4d6c;
	font-size: 14px;
	font-weight: bold;
	line-height: 21px;
	letter-spacing: .3px;
	color: #ffcc00;
	text-decoration: none;
}

/* Main area */
.main {
	display: flex;
	flex-direction: column;
	flex: 1;
	min-width: 0;
	padding-top: 8px;
	background: linear-gradient(#728ea9, #5c7da1 30px, #5c7da1 790px, #4f6c82 790px);
	border: solid #fff;
	border-width: 1px 0;
}

.main-row {
	display: flex;
	height: 782px;
}

.content {
	flex: 0 0 1026px;
	padding: 39px 0 0 46px;
	background: repeating-linear-gradient(transparent 0, transparent 2px, rgba(255, 255, 255, .14) 2px, rgba(255, 255, 255, .14) 3px) 0 0 / 100% 260px no-repeat, linear-gradient(#6795cb, #fff 260px);
	border-top-left-radius: 18px;
	font-size: 11px;
	color: #222;
}

.content-title {
	margin-left: 50px;
	font-size: 14px;
	line-height: 20px;
	letter-spacing: .5px;
	color: #2b4263;
}

h3 {
	font-size: 12px;
	line-height: 14px;
	color: #2b4263;
}

.sec-mux {
	margin-top: 33px;
}

.mux {
	margin-top: 21px;
	border-collapse: collapse;
}

.mux th {
	height: 14px;
	padding: 0;
	font-size: 12px;
	line-height: 14px;
	text-align: left;
	color: #2b4263;
}

.mux td {
	height: 29px;
	padding: 0 0 2px;
}

.m1 { width: 38px; }
.m2 { width: 94px; }
.m3 { width: 70px; }
.m4 { width: 33px; }

.mux-net {
	padding-left: 2px !important;
}

.mux td:nth-child(4) {
	padding-left: 1px;
}

.radio {
	display: block;
	width: 13px;
	height: 13px;
	margin: 2px 0 0 7px;
	appearance: none;
	background: radial-gradient(circle, #333 0, #333 3.200px, #fff 3.700px);
	border: 1.500px solid #444;
	border-radius: 50%;
}

.abbr {
	border-bottom: 1px dotted #222;
}

.tuned {
	display: block;
	width: 12px;
	height: 14px;
	margin-left: 1px;
}

.sec-scan {
	margin: 11px 0 0 1px;
}

.scan-row {
	display: flex;
	align-items: center;
	margin: 20px 0 0 4px;
}

.btn {
	height: 20px;
	background: #e1e1e1;
	border: 1px solid #adadad;
	font-family: "Liberation Sans", Arial, sans-serif;
	font-size: 13px;
	color: #111;
}

.btn-scan {
	width: 48px;
	margin-right: 30px;
}

.warn {
	letter-spacing: -.03px;
}

.note {
	margin-top: 15px;
	line-height: 14px;
}

.note a {
	color: #00e;
}

.sec-chan {
	margin: 26px 0 0 1px;
}

.chan {
	width: 554px;
	margin-top: 17px;
	border-collapse: collapse;
	table-layout: fixed;
}

.c-en { width: 55px; }
.c-num { width: 56px; }
.c-name { width: 128px; }
.c-st { width: 20px; }
.c-ca { width: 29px; }
.c-addr { width: 120px; }
.c-port { width: 53px; }
.c-ttl { width: 46px; }
.c-dscp { width: 47px; }

.chan th {
	height: 30px;
	padding: 0 0 2px;
	font-size: 12px;
	line-height: 15px;
	text-align: left;
	color: #2b4263;
	white-space: nowrap;
}

.chan th:nth-child(2) {
	padding-bottom: 0;
}

.chan th:nth-child(n+6) {
	text-indent: -1.500px;
}

.chan th.th-ca {
	padding-left: 1px;
}

.chan td {
	height: 24px;
	padding: 0 0 2px;
	vertical-align: middle;
}

.center {
	text-align: center;
}

.check {
	display: block;
	position: relative;
	width: 13px;
	height: 13px;
	margin-left: 22px;
	appearance: none;
	background: #fff;
	border: 1px solid #333;
}

.check:checked::after {
	content: "";
	position: absolute;
	left: 3px;
	top: 1px;
	width: 4px;
	height: 8px;
	border: solid #666;
	border-width: 0 1.500px 1.500px 0;
	transform: rotate(40deg);
}

.ic-st {
	display: block;
	width: 16px;
	height: 16px;
	margin-left: 1px;
}

.ic-lock {
	display: block;
	width: 18px;
	height: 18px;
	margin: 0 0 2px 7px;
}

.field {
	display: block;
	width: calc(100% - 2px);
	height: 22px;
	padding: 0 3px;
	background: #fff;
	border: 1px solid #767676;
	font-family: "Liberation Sans", Arial, sans-serif;
	font-size: 13px;
	color: #000;
}

.form-btns {
	display: flex;
	gap: 10px;
	margin-left: 1px;
}

.btn-apply {
	width: 51px;
}

.btn-cancel {
	width: 58px;
}

/* Help panel */
.help-col {
	flex: 0 0 423px;
	padding: 10px 10px 0;
	overflow: hidden;
}

.help {
	height: 772px;
	padding: 10px 10px 0;
	background: #bbdaf9;
	border: solid #fff;
	border-width: 2px 2px 0;
	overflow: hidden;
	font-size: 11px;
	line-height: 13px;
	letter-spacing: -.04px;
	color: #35506f;
}

.help-h {
	font-size: 14px;
	line-height: 16px;
	color: #2b4263;
}

.help-h2 {
	margin: 19px 0 20px;
}

.help p {
	margin-bottom: 19px;
	white-space: nowrap;
}

.legend {
	display: grid;
	grid-template-columns: 22px 1fr;
	column-gap: 6px;
	align-items: center;
	margin: -3px 0 8px 37px;
}

.legend span {
	padding: 5px 0;
	white-space: nowrap;
}

.leg-ic {
	justify-self: center;
	width: 15px;
	height: 15px;
}

.leg-big {
	width: 17px;
	height: 17px;
}

.scrollbar {
	display: flex;
	flex-direction: column;
	flex: 0 0 16px;
	background: #f0f0f0;
}

.sb-arrow {
	flex: none;
	width: 10px;
	height: 6px;
	margin: 6px 3px 4px;
}

.sb-thumb {
	height: 408px;
	background: #c8c8c8;
}

.sb-down {
	margin-top: auto;
	margin-bottom: 5px;
}

.strip {
	height: 22px;
	padding-right: 10px;
	background: #9eadbd;
	border-bottom-left-radius: 18px;
	text-align: right;
}

.site {
	font-size: 14px;
	font-weight: bold;
	line-height: 20px;
	color: #ffcc00;
}

/* Windows taskbar */
.taskbar {
	display: flex;
	align-items: stretch;
	flex: 0 0 40px;
	background: #2b2b2b;
}

.start {
	display: flex;
	align-items: center;
	justify-content: center;
	width: 48px;
	background: #050505;
}

.start svg {
	width: 16px;
	height: 16px;
}

.search {
	display: flex;
	align-items: center;
	width: 344px;
	padding-left: 10px;
	background: #f2f2f2;
	border-top: 1px solid #bbb;
	font-family: "Open Sans", sans-serif;
	font-size: 14.500px;
	color: #333;
}

.cortana {
	width: 21px;
	height: 21px;
	border: 3px solid #111;
	border-radius: 50%;
}

.search-text {
	margin-left: 9px;
}

.mic {
	width: 12px;
	height: 18px;
	margin-left: auto;
	margin-right: 15px;
}

.task-apps {
	display: flex;
}

.app {
	display: flex;
	align-items: center;
	justify-content: center;
	width: 49.100px;
	height: 40px;
	position: relative;
}

.app svg {
	width: 24px;
	height: 24px;
}

.app.run::after {
	content: "";
	position: absolute;
	left: 5px;
	right: 5px;
	bottom: 0;
	height: 2px;
	background: #76b9ed;
}

.app.active {
	background: #555;
}

.app.active::after {
	left: 0;
	right: 0;
}

.tray {
	display: flex;
	align-items: center;
	margin-left: auto;
	padding-right: 14px;
	font-family: "Open Sans", sans-serif;
	font-size: 11px;
	color: #eee;
}

.tray-ic {
	width: 17px;
	height: 17px;
	margin-right: 8px;
}

.chev {
	width: 13px;
}

.clock {
	display: flex;
	flex-direction: column;
	align-items: center;
	width: 64px;
	margin: 0 18px 0 .5px;
	line-height: 19px;
}

.notif {
	position: relative;
	width: 22px;
	height: 28px;
}

.notif svg {
	position: absolute;
	left: 0;
	top: 3px;
	width: 17px;
	height: 16px;
}

.notif-badge {
	position: absolute;
	left: 7px;
	top: 11px;
	width: 15px;
	height: 15px;
	background: #2b2b2b;
	border: 1px solid #ddd;
	border-radius: 50%;
	font-size: 10px;
	line-height: 13px;
	text-align: center;
}
```
